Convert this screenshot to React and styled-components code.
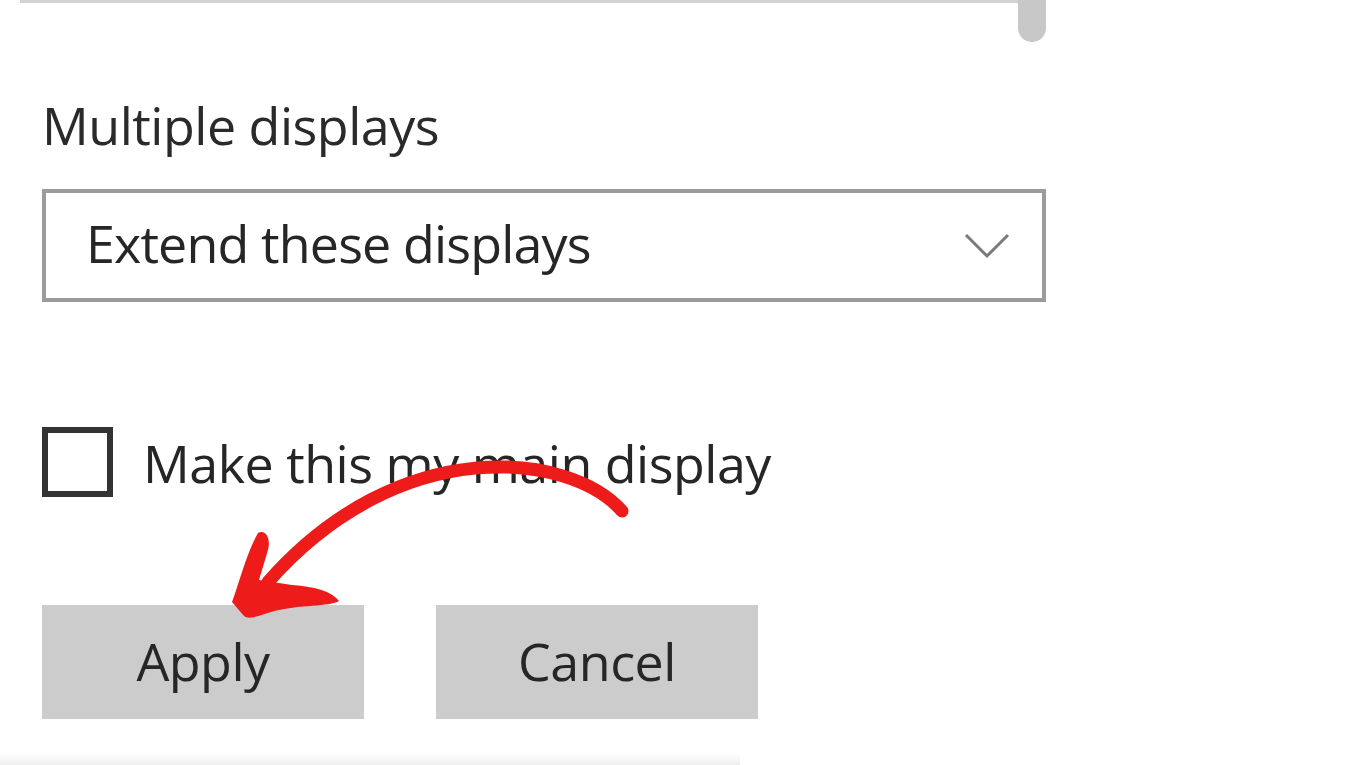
import React from "react"
import styled, { createGlobalStyle } from "styled-components"

const GlobalStyle = createGlobalStyle`
  html, body {
    margin: 0;
    padding: 0;
    background: #ffffff;
  }
  body {
    font-family: "Open Sans", "Noto Sans", "Liberation Sans", sans-serif;
    color: #222;
  }
`

const Page = styled.div`
  position: relative;
  width: 1360px;
  height: 765px;
  overflow: hidden;
  background: #fff;
`

const TopStrip = styled.div`
  display: flex;
  align-items: flex-start;
  height: 42px;
  margin-left: 20px;
`

const TopRule = styled.div`
  width: 998px;
  height: 3px;
  background: #d2d2d2;
`

const ScrollThumb = styled.div`
  width: 28px;
  height: 42px;
  background: #c8c8c8;
  border-radius: 0 0 14px 14px;
`

const Content = styled.div`
  display: flex;
  flex-direction: column;
  align-items: flex-start;
  padding-left: 42px;
`

const Heading = styled.div`
  margin-top: 56px;
  font-size: 52px;
  line-height: 53px;
  letter-spacing: -0.5px;
  color: #2a2a2a;
`

const Select = styled.div`
  box-sizing: border-box;
  display: flex;
  align-items: center;
  width: 1004px;
  height: 113px;
  margin-top: 38px;
  padding: 0 32px 6px 40px;
  border: 4px solid #9b9b9b;
  font-size: 52px;
  line-height: 53px;
  letter-spacing: -0.85px;
  color: #262626;
`

const Chevron = styled.svg`
  margin-left: auto;
  margin-top: 6px;
`

const CheckRow = styled.label`
  display: flex;
  align-items: center;
  gap: 30px;
  margin-top: 125px;
  font-size: 52px;
  line-height: 53px;
  letter-spacing: -0.5px;
  color: #262626;
`

const CheckBox = styled.span`
  box-sizing: border-box;
  display: block;
  width: 71px;
  height: 70px;
  border: 6px solid #333;
  background: #fff;
`

const ButtonRow = styled.div`
  display: flex;
  gap: 72px;
  margin-top: 108px;
`

const Button = styled.button`
  box-sizing: border-box;
  width: 322px;
  height: 114px;
  border: none;
  padding: 0 0 4px 0;
  background: #cccccc;
  font-family: inherit;
  font-size: 52px;
  line-height: 53px;
  letter-spacing: -0.5px;
  color: #262626;
`

const BottomFade = styled.div`
  position: absolute;
  left: 0;
  bottom: 0;
  width: 740px;
  height: 12px;
  background: linear-gradient(to bottom, rgba(255,255,255,0), #efefef);
`

const Annotation = styled.svg`
  position: absolute;
  left: 0;
  top: 0;
  pointer-events: none;
`

export default function App() {
  return (
    <Page>
      <GlobalStyle />
      <TopStrip>
        <TopRule />
        <ScrollThumb />
      </TopStrip>
      <Content>
        <Heading>Multiple displays</Heading>
        <Select>
          Extend these displays
          <Chevron width="46" height="26" viewBox="0 0 46 26">
            <path d="M2 2 L23 23 L44 2" fill="none" stroke="#7a7a7a" strokeWidth="3" />
          </Chevron>
        </Select>
        <CheckRow>
          <CheckBox />
          Make this my main display
        </CheckRow>
        <ButtonRow>
          <Button>Apply</Button>
          <Button>Cancel</Button>
        </ButtonRow>
      </Content>
      <BottomFade />
      <Annotation width="1360" height="765" viewBox="0 0 1360 765">
        <path
          d="M622 511 C570 452, 400 432, 268 582"
          fill="none"
          stroke="#ee1b1b"
          strokeWidth="13"
          strokeLinecap="round"
        />
        <path
          d="M258 533 C266 529, 271 539, 268 550 L259 580 L292 585 C316 587, 331 591, 339 601 C330 607, 300 604, 271 612 C258 616, 249 620, 244 616 L232 602 C240 580, 247 552, 258 533 Z"
          fill="#ee1b1b"
        />
      </Annotation>
    </Page>
  )
}
